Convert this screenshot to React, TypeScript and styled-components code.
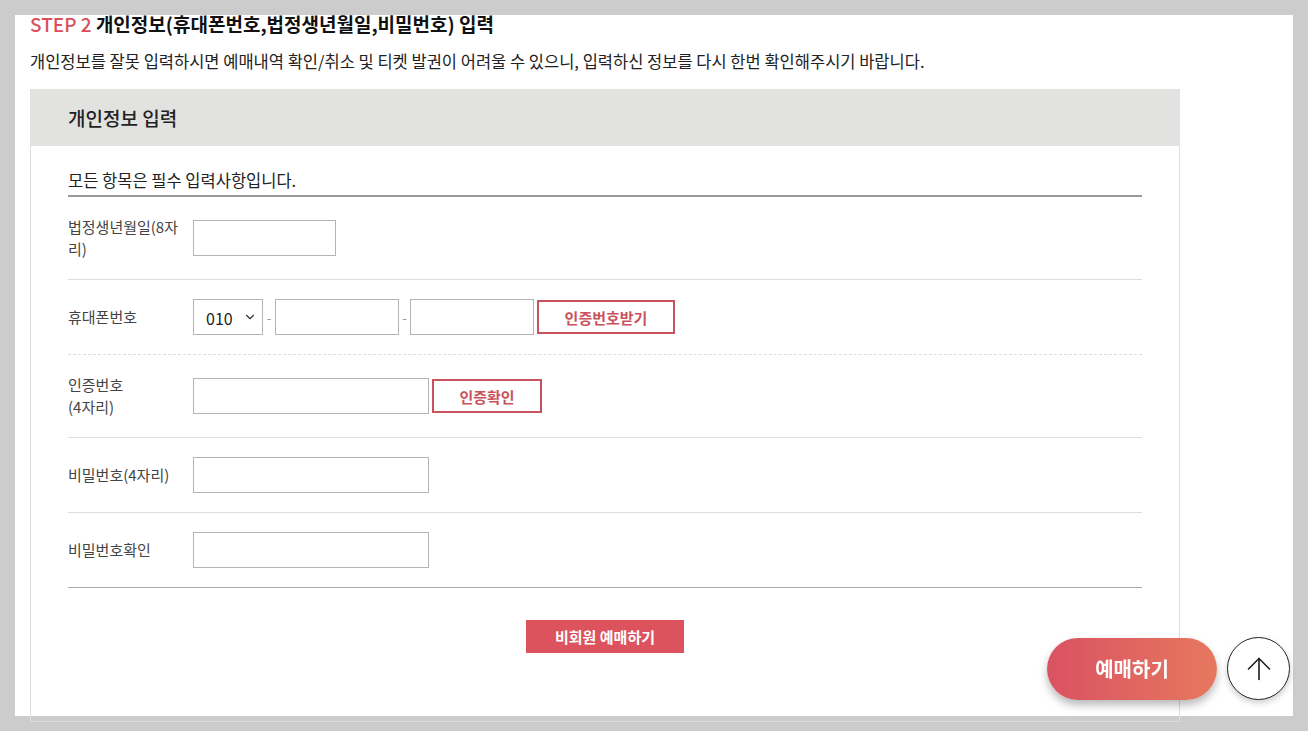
import React from 'react'
import styled, { createGlobalStyle } from 'styled-components'
import { ChevronDown, ArrowUp } from 'lucide-react'

const GlobalStyle = createGlobalStyle`
    html, body {
        margin: 0;
        padding: 0;
        background: #cccccc;
        font-family: "Noto Sans CJK KR", "Noto Sans", sans-serif;
        color: #222;
        overflow: hidden;
    }
    * { box-sizing: border-box; }
`

const Page = styled.div`
    margin: 15px;
    height: 701px;
    background: #fff;
    padding: 0 15px;
`

const Title = styled.h2`
    margin: 0;
    font-size: 19px;
    line-height: 17px;
    font-weight: 700;
    color: #111;

    & > span {
        color: #d9505c;
        font-weight: 500;
    }
`

const Notice = styled.p`
    margin: 17px 0 0;
    font-size: 16.5px;
    line-height: 24px;
    color: #222;
`

const Panel = styled.section`
    width: 1150px;
    margin-top: 16px;
`

const PanelHead = styled.div`
    height: 57px;
    background: #e2e2e0;
    padding-left: 38px;
    display: flex;
    align-items: center;
    font-size: 19px;
    font-weight: 500;
    color: #222;
`

const PanelBody = styled.div`
    border: 1px solid #ddd;
    border-top: none;
    padding: 0 37px 68px;
`

const Required = styled.div`
    padding: 22px 0 3px;
    font-size: 16.5px;
    line-height: 24px;
    color: #222;
    border-bottom: 2px solid #999;
`

const Row = styled.div<{ $line?: 'solid' | 'dashed' | 'dark' }>`
    display: flex;
    align-items: center;
    padding: 19px 0;
    border-bottom: 1px ${p => (p.$line === 'dashed' ? 'dashed' : 'solid')}
        ${p => (p.$line === 'dark' ? '#aaa' : '#ddd')};
`

const Label = styled.div`
    width: 125px;
    padding-right: 8px;
    flex-shrink: 0;
    font-size: 15px;
    line-height: 22px;
    color: #444;
`

const Field = styled.div`
    display: flex;
    align-items: center;
`

const Input = styled.input<{ $w: number }>`
    width: ${p => p.$w}px;
    height: 36px;
    border: 1px solid #b5b5b5;
    background: #fff;
    padding: 0 10px;
    font-family: inherit;
    font-size: 14px;
    outline: none;
`

const SelectWrap = styled.div`
    position: relative;
    width: 70px;
    height: 36px;

    & > svg {
        position: absolute;
        right: 6px;
        top: 11px;
        pointer-events: none;
        color: #333;
    }
`

const Select = styled.select`
    appearance: none;
    width: 100%;
    height: 100%;
    border: 1px solid #b5b5b5;
    background: #fff;
    padding: 2px 0 0 12px;
    font-family: "Noto Sans CJK KR", sans-serif;
    font-size: 16px;
    color: #222;
    outline: none;
`

const Dash = styled.span<{ $w: number }>`
    width: ${p => p.$w}px;
    text-align: center;
    font-size: 13px;
    color: #999;
`

const OutlineBtn = styled.button<{ $w: number }>`
    width: ${p => p.$w}px;
    height: 34px;
    margin-left: 3px;
    border: 2px solid #c9535d;
    background: #fff;
    color: #c9535d;
    font-family: inherit;
    font-size: 15px;
    font-weight: 700;
    cursor: pointer;
`

const SubmitArea = styled.div`
    display: flex;
    justify-content: center;
    padding-top: 32px;
`

const SubmitBtn = styled.button`
    width: 158px;
    height: 33px;
    border: none;
    background: #dc535d;
    color: #fff;
    font-family: inherit;
    font-size: 15px;
    font-weight: 700;
    cursor: pointer;
`

const Floating = styled.div`
    position: fixed;
    right: 18px;
    bottom: 31px;
    display: flex;
    align-items: center;
    gap: 10px;
`

const BookBtn = styled.button`
    width: 170px;
    height: 62px;
    border: none;
    border-radius: 31px;
    background: linear-gradient(90deg, #da5262 0%, #e6785f 100%);
    box-shadow: 0 5px 9px rgba(0, 0, 0, 0.28);
    color: #fff;
    font-family: inherit;
    font-size: 20px;
    font-weight: 700;
    cursor: pointer;
`

const TopBtn = styled.button`
    width: 63px;
    height: 63px;
    border-radius: 50%;
    border: 1px solid #222;
    background: #fff;
    box-shadow: 0 3px 6px rgba(0, 0, 0, 0.2);
    display: flex;
    align-items: center;
    justify-content: center;
    color: #222;
    cursor: pointer;
    padding: 0;
`

function App() {
  return (
    <>
      <GlobalStyle />
      <Page>
        <Title><span>STEP 2</span> 개인정보(휴대폰번호,법정생년월일,비밀번호) 입력</Title>
        <Notice>개인정보를 잘못 입력하시면 예매내역 확인/취소 및 티켓 발권이 어려울 수 있으니, 입력하신 정보를 다시 한번 확인해주시기 바랍니다.</Notice>
        <Panel>
          <PanelHead>개인정보 입력</PanelHead>
          <PanelBody>
            <Required>모든 항목은 필수 입력사항입니다.</Required>
            <Row>
              <Label>법정생년월일(8자리)</Label>
              <Field><Input $w={143} /></Field>
            </Row>
            <Row $line="dashed">
              <Label>휴대폰번호</Label>
              <Field>
                <SelectWrap>
                  <Select defaultValue="010">
                    <option>010</option>
                    <option>011</option>
                    <option>016</option>
                    <option>017</option>
                    <option>019</option>
                  </Select>
                  <ChevronDown size={14} strokeWidth={2} />
                </SelectWrap>
                <Dash $w={12}>-</Dash>
                <Input $w={124} />
                <Dash $w={11}>-</Dash>
                <Input $w={124} />
                <OutlineBtn $w={138}>인증번호받기</OutlineBtn>
              </Field>
            </Row>
            <Row>
              <Label>인증번호<br />(4자리)</Label>
              <Field>
                <Input $w={236} />
                <OutlineBtn $w={110}>인증확인</OutlineBtn>
              </Field>
            </Row>
            <Row>
              <Label>비밀번호(4자리)</Label>
              <Field><Input $w={236} type="password" /></Field>
            </Row>
            <Row $line="dark">
              <Label>비밀번호확인</Label>
              <Field><Input $w={236} type="password" /></Field>
            </Row>
            <SubmitArea>
              <SubmitBtn>비회원 예매하기</SubmitBtn>
            </SubmitArea>
          </PanelBody>
        </Panel>
      </Page>
      <Floating>
        <BookBtn>예매하기</BookBtn>
        <TopBtn><ArrowUp size={36} strokeWidth={1.1} /></TopBtn>
      </Floating>
    </>
  )
}

export default App
